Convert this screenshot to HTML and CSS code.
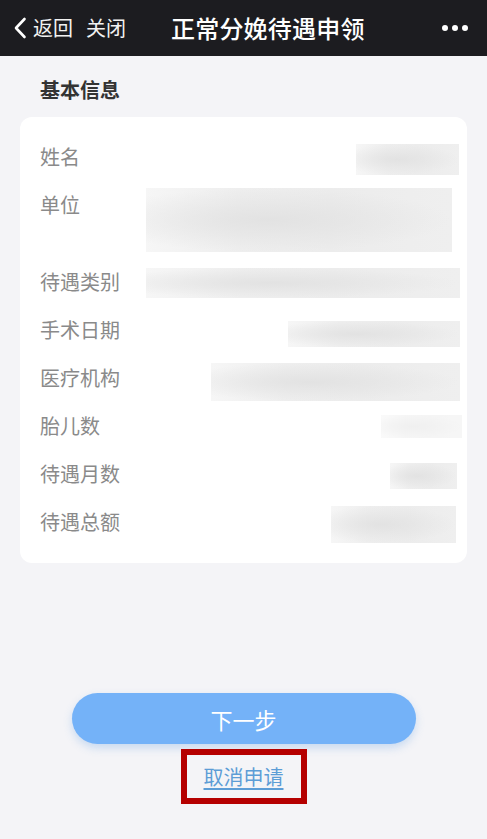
FILE: index.html
```html
<!DOCTYPE html>
<html lang="zh-CN">
<head>
<meta charset="utf-8">
<title>正常分娩待遇申领</title>
<link rel="stylesheet" href="styles.css">
</head>
<body>
<header class="nav">
  <div class="nav-left">
    <svg class="chev" viewBox="0 0 14 22" width="14" height="22"><path d="M11.5 2 L3 11 L11.5 20" fill="none" stroke="#fff" stroke-width="2.6" stroke-linecap="round" stroke-linejoin="round"/></svg>
    <span class="nav-btn">返回</span>
    <span class="nav-btn close">关闭</span>
  </div>
  <div class="nav-title">正常分娩待遇申领</div>
  <div class="nav-more"><i></i><i></i><i></i></div>
</header>
<main class="page">
  <h2 class="sec-title">基本信息</h2>
  <section class="card">
    <div class="row"><span class="label">姓名</span><span class="val v1"></span></div>
    <div class="row"><span class="label">单位</span><span class="val v2"></span></div>
    <div class="row"><span class="label">待遇类别</span><span class="val v3"></span></div>
    <div class="row"><span class="label">手术日期</span><span class="val v4"></span></div>
    <div class="row"><span class="label">医疗机构</span><span class="val v5"></span></div>
    <div class="row"><span class="label">胎儿数</span><span class="val v6"></span></div>
    <div class="row"><span class="label">待遇月数</span><span class="val v7"></span></div>
    <div class="row"><span class="label">待遇总额</span><span class="val v8"></span></div>
  </section>
  <div class="actions">
    <button class="btn-next">下一步</button>
    <div class="mark"><a class="cancel" href="#">取消申请</a></div>
  </div>
</main>
</body>
</html>
```
FILE: styles.css
```css
html, body {
  margin: 0;
  padding: 0;
}
body {
  width: 487px;
  height: 839px;
  background: #f4f4f7;
  font-family: "Noto Sans CJK SC", "Noto Sans", sans-serif;
  overflow: hidden;
}
.nav {
  height: 56px;
  background: #1c1c20;
  display: flex;
  align-items: center;
  color: #fff;
  position: relative;
}
.nav-left {
  display: flex;
  align-items: center;
  padding-left: 13px;
}
.chev {
  display: block;
  margin-right: 6px;
}
.nav-btn {
  font-size: 20px;
  line-height: 28px;
  color: #f2f2f2;
}
.nav-btn.close {
  margin-left: 13px;
}
.nav-title {
  margin-left: 45px;
  font-size: 24px;
  line-height: 30px;
  font-weight: 500;
  letter-spacing: 0.2px;
}
.nav-more {
  margin-left: auto;
  margin-right: 19px;
  display: flex;
  gap: 4px;
}
.nav-more i {
  width: 6px;
  height: 6px;
  border-radius: 50%;
  background: #fff;
  display: block;
}
.page {
  padding: 0 20px;
}
.sec-title {
  margin: 0;
  padding: 21px 0 0 20px;
  height: 40px;
  font-size: 20px;
  line-height: 26px;
  font-weight: 700;
  color: #333;
  box-sizing: content-box;
}
.card {
  margin-top: 0;
  background: #fff;
  border-radius: 12px;
  padding: 16px 7px 17px 20px;
}
.row {
  display: flex;
  align-items: flex-start;
  padding: 6px 0;
}
.label {
  font-size: 20px;
  line-height: 36px;
  color: #8a8a8a;
  white-space: nowrap;
}
.val {
  margin-left: auto;
  margin-bottom: -12px;
  display: block;
  background:
    radial-gradient(ellipse at 40% 50%, rgba(225,225,225,0.9), rgba(235,235,235,0) 70%),
    linear-gradient(90deg, #f6f6f6 0%, #eeeeee 30%, #ececec 60%, #efefef 100%);
}
.v1 { width: 103px; height: 31px; margin-top: 5px; margin-right: 1px; }
.v2 { width: 306px; height: 64px; margin-top: 1px; margin-right: 8px; margin-bottom: 0; }
.v3 { width: 314px; height: 30px; margin-top: 4px; margin-right: 0; }
.v4 { width: 172px; height: 26px; margin-top: 9px; margin-right: 0; }
.v5 { width: 249px; height: 38px; margin-top: 3px; margin-right: 0; }
.v6 { width: 81px; height: 23px; margin-top: 7px; margin-right: -2px; opacity: 0.5; }
.v7 { width: 67px; height: 26px; margin-top: 7px; margin-right: 3px; }
.v8 { width: 125px; height: 37px; margin-top: 2px; margin-right: 4px; }
.actions {
  margin-top: 130px;
  display: flex;
  flex-direction: column;
  align-items: center;
}
.btn-next {
  width: 344px;
  height: 51px;
  border: none;
  border-radius: 26px;
  background: #74b2f8;
  color: #fff;
  font-family: "Noto Sans CJK SC", "Noto Sans", sans-serif;
  font-size: 22px;
  box-shadow: 0 4px 8px rgba(100, 160, 230, 0.3);
}
.mark {
  margin-top: 5px;
  width: 114px;
  height: 43px;
  border: 6px solid #b50000;
  display: flex;
  align-items: center;
  justify-content: center;
}
.cancel {
  font-size: 20px;
  line-height: 28px;
  color: #5c9dd6;
  text-decoration: underline;
  text-underline-offset: 3px;
}
```
